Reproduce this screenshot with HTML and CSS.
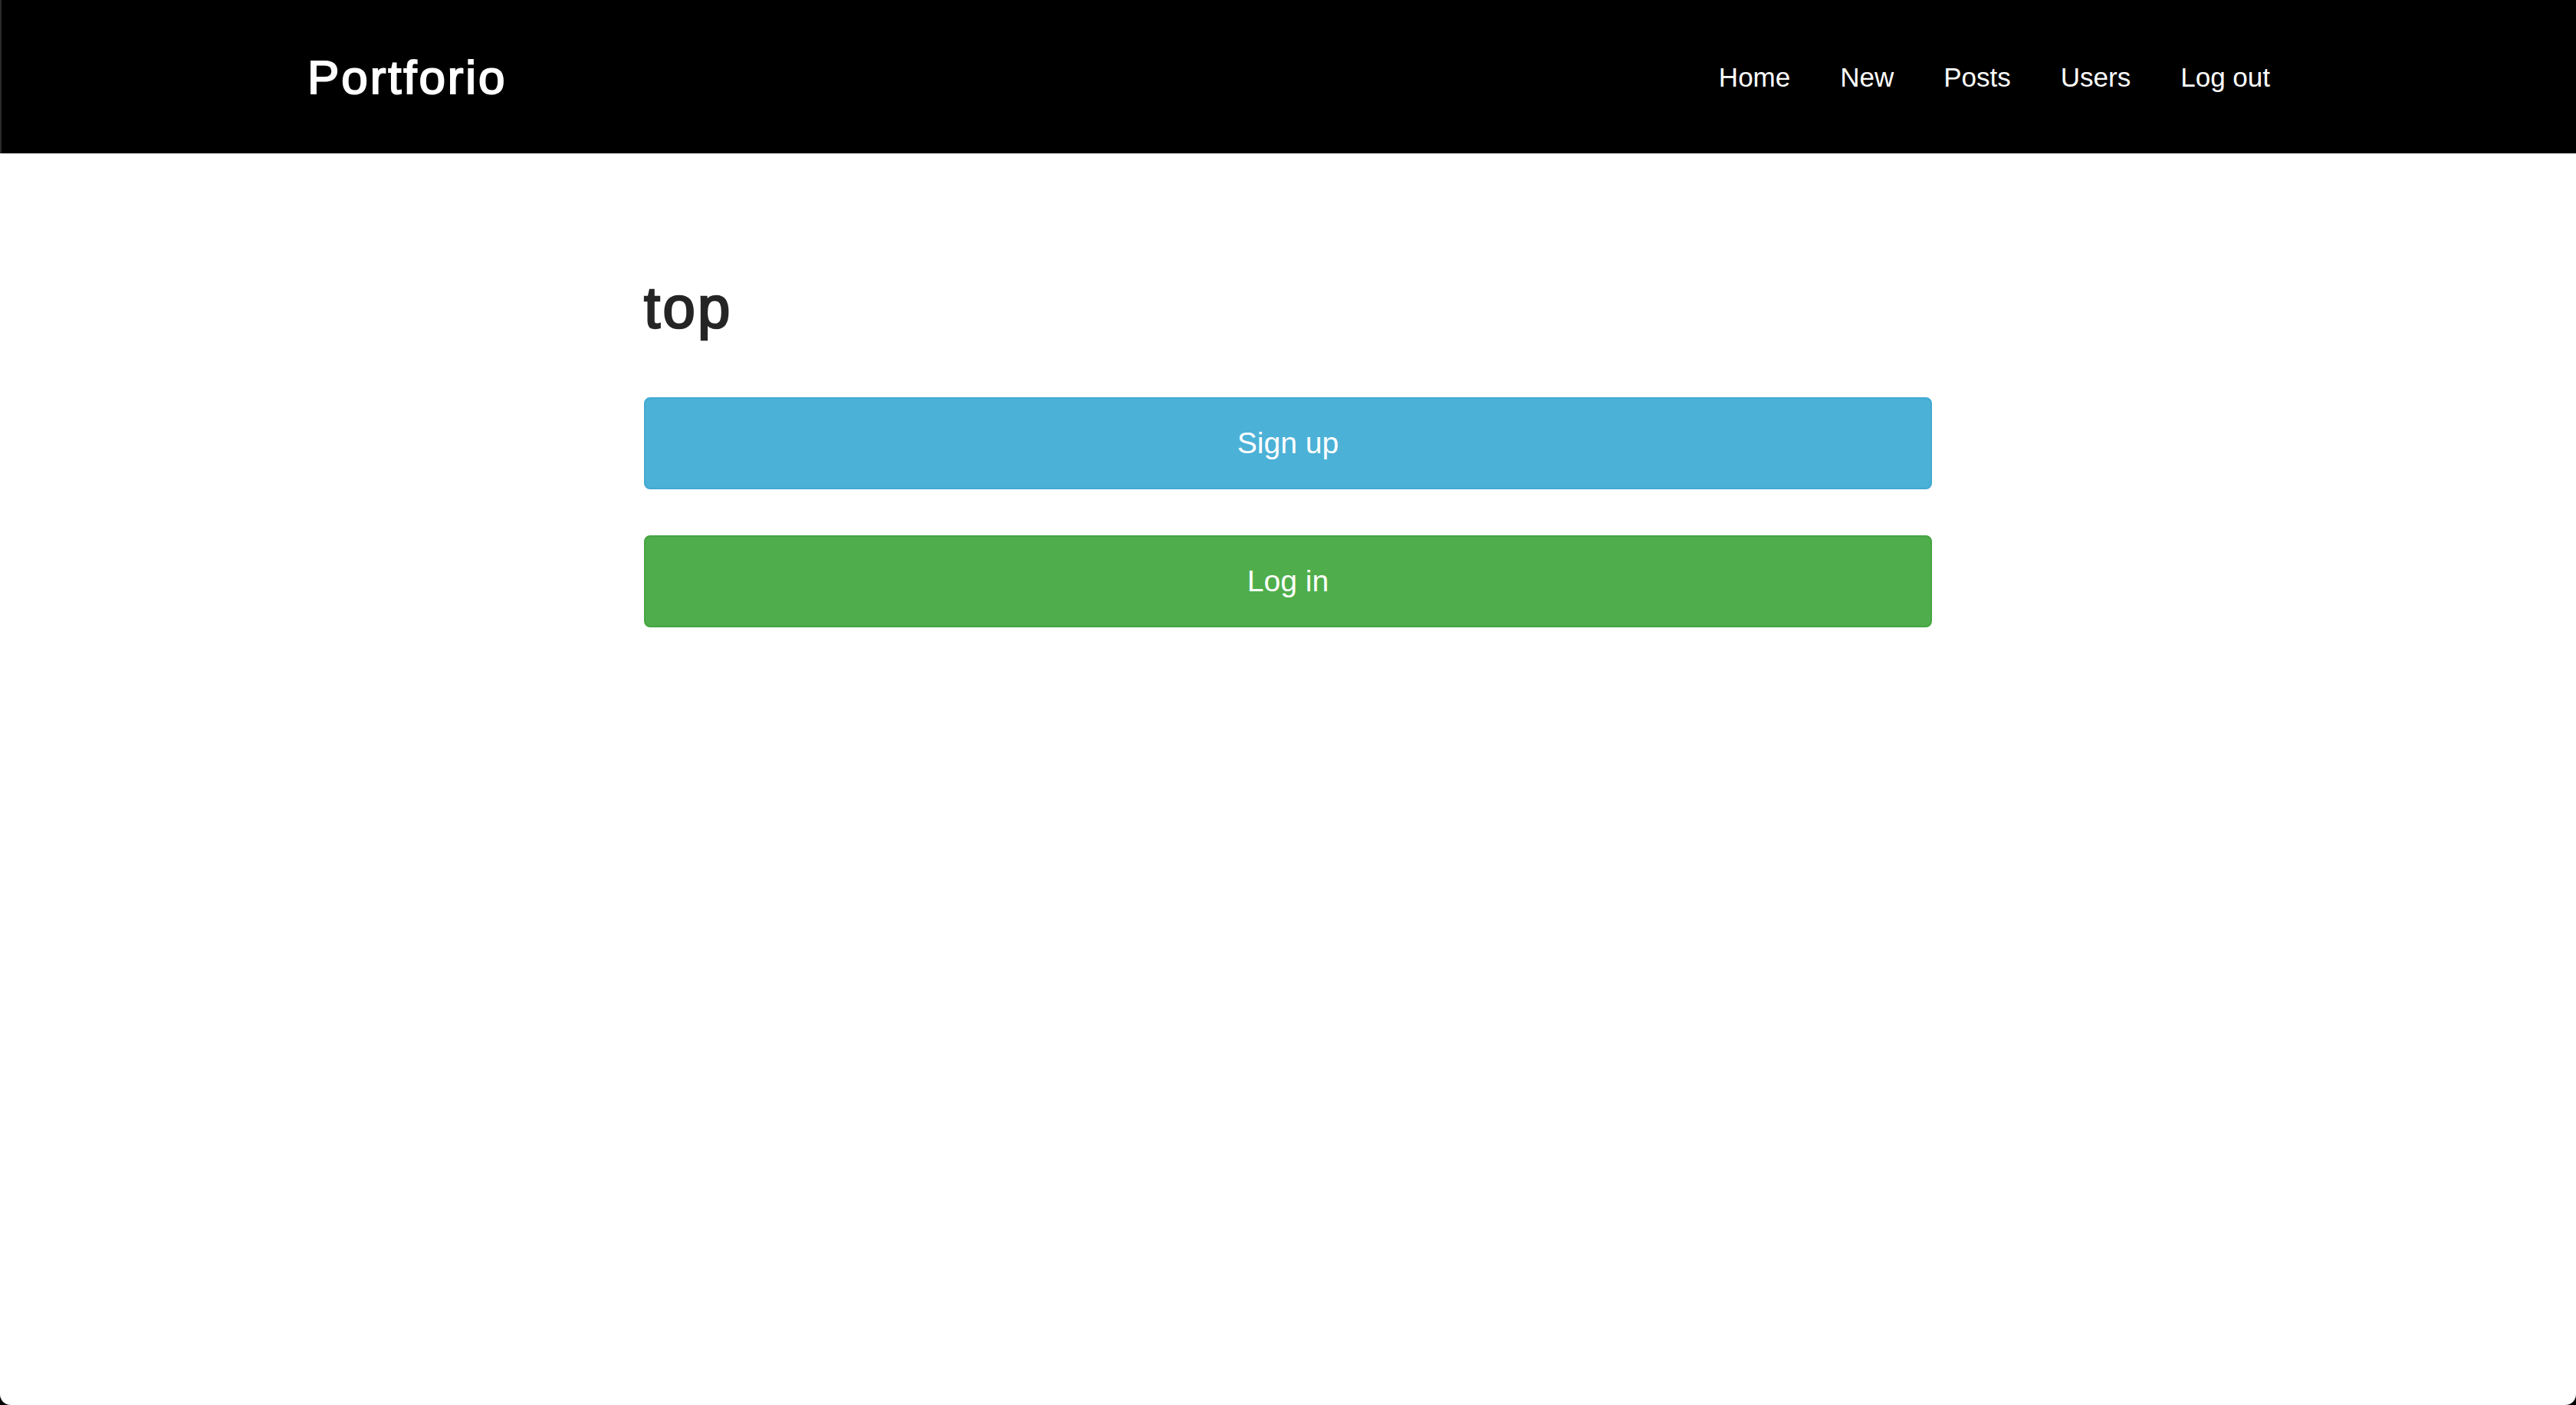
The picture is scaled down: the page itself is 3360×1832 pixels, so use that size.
FILE: index.html
```html
<!DOCTYPE html>
<html lang="en">
<head>
<meta charset="utf-8">
<title>Portforio</title>
<link rel="stylesheet" href="styles.css">
</head>
<body>
<div class="window">
  <header class="navbar">
    <div class="navbar-inner">
      <a class="brand" href="#">Portforio</a>
      <nav class="nav">
        <a class="nav-link" href="#">Home</a>
        <a class="nav-link" href="#">New</a>
        <a class="nav-link" href="#">Posts</a>
        <a class="nav-link" href="#">Users</a>
        <a class="nav-link" href="#">Log out</a>
      </nav>
    </div>
  </header>
  <main class="content">
    <h1 class="title">top</h1>
    <a class="btn btn-info" href="#">Sign up</a>
    <a class="btn btn-success" href="#">Log in</a>
  </main>
</div>
</body>
</html>
```

FILE: styles.css
```css
html {
  background: #000;
}
body {
  margin: 0;
  font-family: "Liberation Sans", Arial, Helvetica, sans-serif;
}
.window {
  min-height: 1832px;
  box-sizing: border-box;
  background: #fff;
  border-radius: 0 0 14px 14px;
  overflow: hidden;
}
.navbar {
  background: #000;
  height: 200px;
  border-left: 2px solid #2a2a2a;
  box-sizing: border-box;
}
.navbar-inner {
  width: 2560px;
  margin: 0 auto;
  height: 100%;
  display: flex;
  align-items: center;
  justify-content: space-between;
}
.brand {
  color: #fff;
  text-decoration: none;
  font-size: 62px;
  letter-spacing: 2.9px;
  -webkit-text-stroke: 2px #fff;
  line-height: 1;
  margin-top: 2px;
}
.nav {
  display: flex;
  gap: 65px;
}
.nav-link {
  color: #fff;
  text-decoration: none;
  font-size: 35px;
  line-height: 1;
}
.content {
  width: 1680px;
  margin: 0 auto;
  padding-top: 163px;
}
.title {
  margin: 0 0 79px;
  font-size: 76px;
  line-height: 1;
  font-weight: normal;
  color: #252525;
  -webkit-text-stroke: 2.6px #252525;
  letter-spacing: 3.3px;
}
.btn {
  display: flex;
  align-items: center;
  justify-content: center;
  height: 120px;
  box-sizing: border-box;
  border: 2px solid transparent;
  border-radius: 8px;
  color: #fff;
  text-decoration: none;
  font-size: 39px;
  margin-bottom: 60px;
}
.btn-info {
  background: #4cb1d6;
  border-color: #40a9d2;
}
.btn-success {
  background: #4fae4b;
  border-color: #45a441;
}
```
